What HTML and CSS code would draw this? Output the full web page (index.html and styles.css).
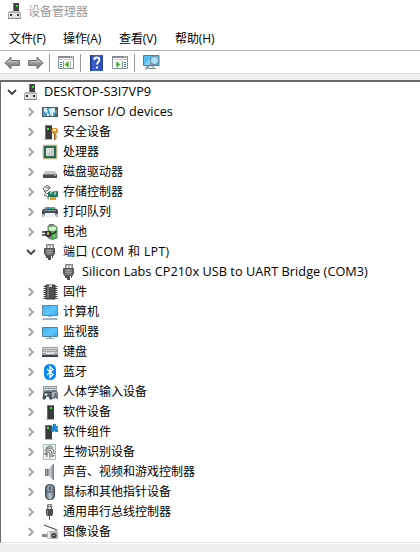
FILE: index.html
```
<!DOCTYPE html>
<html lang="zh-CN">
<head>
<meta charset="utf-8">
<title>设备管理器</title>
<link rel="stylesheet" href="styles.css">
</head>
<body>
<svg class="defs" width="0" height="0">
  <defs>
    <linearGradient id="screen" x1="0" y1="0" x2="1" y2="1"><stop offset="0" stop-color="#35acf0"/><stop offset=".55" stop-color="#62c6ff"/><stop offset="1" stop-color="#2fabf5"/></linearGradient>
    <linearGradient id="metal" x1="0" x2="1"><stop offset="0" stop-color="#555"/><stop offset=".5" stop-color="#8a8a8a"/><stop offset="1" stop-color="#505050"/></linearGradient>
    <linearGradient id="arrow" x1="0" y1="0" x2="0" y2="1"><stop offset="0" stop-color="#b4b4b4"/><stop offset="1" stop-color="#777"/></linearGradient>
    <linearGradient id="help" x1="0" x2="1"><stop offset="0" stop-color="#1c3a94"/><stop offset=".2" stop-color="#3d62c8"/><stop offset="1" stop-color="#2c4eb4"/></linearGradient>
    <linearGradient id="mouse" x1="0" x2="1"><stop offset="0" stop-color="#53606e"/><stop offset=".5" stop-color="#b9c8d8"/><stop offset="1" stop-color="#56616e"/></linearGradient>
    <linearGradient id="cone" x1="0" x2="1"><stop offset="0" stop-color="#59636c"/><stop offset=".6" stop-color="#c3c8cd"/><stop offset="1" stop-color="#727b83"/></linearGradient>
    <symbol id="right" viewBox="0 0 10 10"><path d="M2.800 1l4 4-4 4" fill="none" stroke="#a3a3a3" stroke-width="1.900"/></symbol>
    <symbol id="down" viewBox="0 0 10 10"><path d="M1 3l4 4 4-4" fill="none" stroke="#404040" stroke-width="1.800"/></symbol>
    <symbol id="tower" viewBox="0 0 16 16"><path d="M4 15h8v1H4z" fill="#b5b5b5"/><path d="M5 1h7v14H5z" fill="#3a3a3a"/><path d="M5 1h1v14H5z" fill="#686868"/><path d="M5 1h7v1H5z" fill="#777"/><path d="M8 3h2v2H8z" fill="#35f53b"/></symbol>
    <symbol id="plug" viewBox="0 0 16 16"><path d="M4 0h8v5H4z" fill="#b8b8b8"/><path d="M4.500 .5h7v4.500h-7z" fill="none" stroke="#858585"/><path d="M6 2h1v2H6zM9 2h1v2H9z" fill="#fff"/><path d="M2.500 4.500h10V9l-1 2.500h-8L2.500 9z" fill="url(#metal)" stroke="#555"/><path d="M4 6.500h7M4 8.500h7" stroke="#999"/><path d="M4 12h2v2H4zM6 12h3v4H6zM10 12h1v2h-1z" fill="#505050"/></symbol>
    <symbol id="computer" viewBox="0 0 14 16"><path d="M5 0h6v8H5z" fill="#444"/><path d="M5 0h1v8H5z" fill="#777"/><path d="M8 2h2v2H8z" fill="#2bdf34"/><path d="M1 8h11l1 2H0z" fill="#b5b5b5"/><path d="M0 10h13v5H0z" fill="#e4e4e4"/><path d="M0 10h1v5H0zM12 10h1v5h-1z" fill="#aaa"/><path d="M0 15h13v1H0z" fill="#858585"/><path d="M2 11h2v2H2zM9 11h2v2H9z" fill="#333"/></symbol>
  </defs>
</svg>
<div class="window">
  <header class="titlebar"><svg class="app-icon"><use href="#computer"/></svg><span>设备管理器</span></header>
  <nav class="menu"><span>文件(F)</span><span>操作(A)</span><span>查看(V)</span><span>帮助(H)</span></nav>
  <div class="toolbar">
    <svg class="arrow-icon" viewBox="0 0 17 14"><path d="M.8 7L7 1v3.500h8.500v5H7V13z" fill="url(#arrow)" stroke="#747474"/><path d="M3 7l3-3v1.800h8" fill="none" stroke="#ccc" stroke-width=".8"/></svg>
    <svg class="arrow-icon next" viewBox="0 0 17 14"><path d="M16.200 7L10 1v3.500H1.500v5H10V13z" fill="url(#arrow)" stroke="#747474"/><path d="M3 5.800h8V4l3 3" fill="none" stroke="#ccc" stroke-width=".8"/></svg>
    <i class="sep first"></i>
    <svg class="panel-icon" viewBox="0 0 16 13"><path d="M.5 .5h15v12H.5z" fill="#fff" stroke="#8c939b"/><path d="M0 0h16v2H0z" fill="#858c94"/><path d="M12 1h1M14 1h1" stroke="#fff"/><path d="M1 3h14v1H1z" fill="#c5cad0"/><path d="M5.500 5v7" stroke="#999"/><path d="M2 6.500h2M2 8.500h2M2 10.500h2" stroke="#4573aa"/><path d="M6 5h6v7H6z" fill="#e3f2db"/><path d="M10.500 5.500v6L7 8.500z" fill="#36a21c"/><path d="M12.500 5v7" stroke="#b0b5ba"/></svg>
    <i class="sep second"></i>
    <svg class="help-icon" viewBox="0 0 13 16"><path d="M0 0h13v16H0z" fill="url(#help)"/><path d="M1 0v16" stroke="#173179"/><path d="M4.500 5V4q0-1.500 2.400-1.500T9.300 5c0 2-2.300 2.200-2.300 4.500M7 11.500v2" fill="none" stroke="#fff" stroke-width="1.900"/></svg>
    <svg class="panel-icon show" viewBox="0 0 16 13"><path d="M.5 .5h15v12H.5z" fill="#fff" stroke="#8c939b"/><path d="M0 0h16v2H0z" fill="#858c94"/><path d="M12 1h1M14 1h1" stroke="#fff"/><path d="M1 3h14v1H1z" fill="#c5cad0"/><path d="M3 5h6v7H3z" fill="#e3f2db"/><path d="M4.500 5.500v6L8 8.500z" fill="#36a21c"/><path d="M10.500 5v7" stroke="#999"/><path d="M12 6.500h2M12 8.500h2M12 10.500h2" stroke="#4573aa"/></svg>
    <i class="sep third"></i>
    <svg class="scan-icon" viewBox="0 0 17 16"><path d="M.5 .5h15.500v10H.5z" fill="#55bdf4" stroke="#3686af"/><path d="M1 10L10 1h5v2L8 10z" fill="#83d2fb"/><path d="M5 13.500h8M8 11h2v2" stroke="#7b8991" fill="none"/><circle cx="11.500" cy="5.500" r="4" fill="#aee0fb" stroke="#768b9b" stroke-width="1.200"/><path d="M8.500 8.500L2.500 14" stroke="#8196a5" stroke-width="1.800"/></svg>
  </div>
  <div class="gap"></div>
  <main class="tree">
    <div class="row root"><svg class="chev"><use href="#down"/></svg><svg class="root-icon"><use href="#computer"/></svg><span class="label latin host">DESKTOP-S3I7VP9</span></div>
    <div class="row"><svg class="chev"><use href="#right"/></svg><svg class="icon" viewBox="0 0 16 16"><path d="M0 3h16v10H0z" fill="#4b5964"/><path d="M1 4h12v8H1z" fill="#459fc9"/><path d="M2 4h3v2l1 2-2 1-2-2zM7 5l3-1h3v4l-2 1v3H9l-1-3zM5 9l2 1v2H5z" fill="#d9f2fb"/><path d="M14 6v4" stroke="#b9c2c9"/></svg><span class="label latin">Sensor I/O devices</span></div>
    <div class="row"><svg class="chev"><use href="#right"/></svg><svg class="icon" viewBox="0 0 16 16"><path d="M2 15h8v1H2z" fill="#b5b5b5"/><path d="M3 1h7v14H3z" fill="#3a3a3a"/><path d="M3 1h1v14H3zM3 1h7v1H3z" fill="#777"/><path d="M5 4h2v2H5z" fill="#35f53b"/><path d="M10 4h5l1 2v2l-1.500 2H14v6h-2v-6h-1L9.500 8V6z" fill="#d99b35"/><path d="M11 5h3v2h-3z" fill="#fff1ce"/><path d="M12.500 9v7M14 12h1M14 14h1" stroke="#9b651f"/></svg><span class="label">安全设备</span></div>
    <div class="row"><svg class="chev"><use href="#right"/></svg><svg class="icon" viewBox="0 0 16 16"><path d="M1.500 1.500h13v13h-13z" fill="#316c50" stroke="#b8a767" stroke-width="2" stroke-dasharray="1 1"/><path d="M2.500 2.500h11v11h-11z" fill="#316c50" stroke="#2f684d"/><path d="M4 4h8v8H4z" fill="#d9dddc"/><path d="M4 12l8-8v8z" fill="#c6caca"/></svg><span class="label">处理器</span></div>
    <div class="row"><svg class="chev"><use href="#right"/></svg><svg class="icon" viewBox="0 0 16 16"><path d="M3 7h10l2 3H1z" fill="#c9c9c9"/><path d="M1 10h14v4H1z" fill="#4b4b4b"/><path d="M1 10h14v1H1z" fill="#858585"/><path d="M12 11h2v1h-2z" fill="#30ec44"/></svg><span class="label">磁盘驱动器</span></div>
    <div class="row"><svg class="chev"><use href="#right"/></svg><svg class="icon" viewBox="0 0 16 16"><path d="M1.500 4L5 1.500l3.500 2L5 7H3L1.500 5.500zM4 4h3M2 7l3 3 3-3" fill="#fff" stroke="#555"/><path d="M6 8l10-1v6H6z" fill="#29755d"/><path d="M8 8h2v2H8zM12 8h2v3h-2z" fill="#85c6ae"/><path d="M2 9h3v4H2zM6 13h1v3H6z" fill="#cfd3d2"/><path d="M8 13h6v3H8z" fill="#eda21c"/><path d="M2 10l4 3v2" fill="none" stroke="#777"/></svg><span class="label">存储控制器</span></div>
    <div class="row"><svg class="chev"><use href="#right"/></svg><svg class="icon" viewBox="0 0 16 16"><path d="M3 3h10l1 3H2z" fill="#8b9399"/><path d="M5 3h3v3H5z" fill="#2697e8"/><path d="M8 3h3v3H8z" fill="#34bd66"/><path d="M1 5h14l1 2v5H0V7z" fill="#454c52"/><path d="M2 6h12v1H2z" fill="#8e979e"/><path d="M3 9h10l1 5H2z" fill="#edf3f7"/><path d="M0 10h3l-1 3H0zM13 10h3v3h-2z" fill="#b3b9be"/></svg><span class="label">打印队列</span></div>
    <div class="row"><svg class="chev"><use href="#right"/></svg><svg class="icon" viewBox="0 0 16 16"><path d="M7 0h5v2H7z" fill="#777"/><path d="M6 2q4-1 8 0l1 2v10q-4 3-9 0z" fill="#48b452" stroke="#777b78"/><path d="M7 3q4-1 7 0v3q-3 2-7 0z" fill="#d6efcf"/><path d="M12 8v5" stroke="#93ed8c"/><path d="M3 7h5l2 2-1 4H5l-2-2z" fill="#383838"/><path d="M0 8h4M0 11h5M9 10q4 0 5-3" stroke="#343434" stroke-width="1.700" fill="none"/><path d="M5 8h2v3H5z" fill="#b5a667"/></svg><span class="label">电池</span></div>
    <div class="row"><svg class="chev"><use href="#down"/></svg><svg class="icon"><use href="#plug"/></svg><span class="label ports">端口 (COM 和 LPT)</span></div>
    <div class="row child"><svg class="icon"><use href="#plug"/></svg><span class="label latin">Silicon Labs CP210x USB to UART Bridge (COM3)</span></div>
    <div class="row"><svg class="chev"><use href="#right"/></svg><svg class="icon" viewBox="0 0 16 16"><path d="M3 2v14M14 2v14" stroke="#444" stroke-width="3" stroke-dasharray="1 1"/><path d="M4 1h9v14H4z" fill="#505050"/><path d="M5 2h2v12H5z" fill="#777"/><path d="M4 1h9v14H4z" fill="none" stroke="#333"/><path d="M7 1h3v2H7z" fill="#ccc"/></svg><span class="label">固件</span></div>
    <div class="row"><svg class="chev"><use href="#right"/></svg><svg class="icon" viewBox="0 0 16 16"><path d="M.5 1.500h15v10H.5z" fill="url(#screen)" stroke="#668699"/><path d="M6 12h4v1H6z" fill="#a6b9c6"/><path d="M1 14h14l1 2H0z" fill="#9fb4c3"/></svg><span class="label">计算机</span></div>
    <div class="row"><svg class="chev"><use href="#right"/></svg><svg class="icon" viewBox="0 0 16 16"><path d="M.5 3.500h15v9H.5z" fill="url(#screen)" stroke="#4f839e"/><path d="M7 13h2v1H7zM4 14h8v1H4z" fill="#8fa1ac"/></svg><span class="label">监视器</span></div>
    <div class="row"><svg class="chev"><use href="#right"/></svg><svg class="icon" viewBox="0 0 16 16"><path d="M0 3h16v8H0z" fill="#9aa3aa"/><path d="M0 11h16v2H0z" fill="#3e4347"/><path d="M1 4.500h14M2 6.500h12M1 8.500h14" stroke="#f7f7f7" stroke-dasharray="1 .6"/><path d="M4 9.500h8" stroke="#e9edf0"/></svg><span class="label">键盘</span></div>
    <div class="row"><svg class="chev"><use href="#right"/></svg><svg class="icon" viewBox="0 0 16 16"><rect x="2" width="12" height="16" rx="5.500" fill="#0687f2"/><path d="M5 5l6 5.500-3 3v-11l3 3L5 11" fill="none" stroke="#fff" stroke-width="1.300"/></svg><span class="label">蓝牙</span></div>
    <div class="row"><svg class="chev"><use href="#right"/></svg><svg class="icon" viewBox="0 0 16 16"><path d="M1 2h14v7H1z" fill="#939ba2"/><path d="M2 3.500h12M2 5.500h12" stroke="#fff" stroke-dasharray="1 .6"/><path d="M1 14l1-5 2-1h4l2 2v5H8l-1-3H4l-1 3H1z" fill="#53606a" stroke="#303a42"/><path d="M9 14V9l2-2h3l2 3v4h-2v-4h-1v4z" fill="#aab2b8" stroke="#404950"/><path d="M4 9v3M2.500 10.500h3" stroke="#eef1f3"/><path d="M7 9h1v1H7z" fill="#3ea4ef"/></svg><span class="label">人体学输入设备</span></div>
    <div class="row"><svg class="chev"><use href="#right"/></svg><svg class="icon"><use href="#tower"/></svg><span class="label">软件设备</span></div>
    <div class="row"><svg class="chev"><use href="#right"/></svg><svg class="icon" viewBox="0 0 16 16"><path d="M3 15h8v1H3z" fill="#b5b5b5"/><path d="M3 1h7v14H3z" fill="#3a3a3a"/><path d="M3 1h1v14H3zM3 1h7v1H3z" fill="#777"/><path d="M5 3h2v2H5z" fill="#35f53b"/><path d="M9 2h2V0h3v2h2v2h-1v1h1v3h-3V7h-1v1H9V5h1V4H9z" fill="#2386d2"/></svg><span class="label">软件组件</span></div>
    <div class="row"><svg class="chev"><use href="#right"/></svg><svg class="icon" viewBox="0 0 16 16"><path d="M1.500 .5h12v15h-12z" fill="#edf4f1" stroke="#9dbeb2"/><path d="M4 4q4-4 7 0M3 7q0-3 4-3 5 0 5 4v2M4 11V8q0-2 3-2t3 3v4M5 13V9q0-1 2-1 1 0 1 2v4M3 9v2M12 11l-1 2" fill="none" stroke="#4b514f" stroke-width=".9"/></svg><span class="label">生物识别设备</span></div>
    <div class="row"><svg class="chev"><use href="#right"/></svg><svg class="icon" viewBox="0 0 16 16"><path d="M3 5h4l4-5h1v16h-1l-4-4H3z" fill="url(#cone)"/><path d="M3 5h3v7H3z" fill="#707980"/><path d="M4 6h1v5H4z" fill="#b0b6bb"/></svg><span class="label">声音、视频和游戏控制器</span></div>
    <div class="row"><svg class="chev"><use href="#right"/></svg><svg class="icon" viewBox="0 0 16 16"><rect x="3.500" y=".5" width="9" height="15" rx="4" fill="url(#mouse)" stroke="#363c43"/><path d="M8 1v7M4 7q4 3 8 0" fill="none" stroke="#4f5963"/><path d="M7.500 3h1v3h-1z" fill="#252a2e"/></svg><span class="label">鼠标和其他指针设备</span></div>
    <div class="row"><svg class="chev"><use href="#right"/></svg><svg class="icon" viewBox="0 0 16 16"><path d="M5.500 .5h4v5h-4z" fill="#d0d0d0" stroke="#777"/><path d="M6 2h1v1H6zM8 2h1v1H8z" fill="#444"/><path d="M4 5h7v5l-1 2H5l-1-2z" fill="#4c4c4c"/><path d="M5 6h1v5H5z" fill="#888"/><path d="M7 12h1v4H7z" fill="#555"/></svg><span class="label">通用串行总线控制器</span></div>
    <div class="row"><svg class="chev"><use href="#right"/></svg><svg class="icon" viewBox="0 0 16 16"><path d="M2 1l13 5" stroke="#4f4f4f" stroke-width="1.300"/><path d="M14 6v3" stroke="#777"/><path d="M0 10h5v3H0z" fill="#858585"/><path d="M5 8l2-1h9v8H6l-1-1z" fill="#bababa"/><path d="M6 8h2v6H6z" fill="#f0f0f0"/><circle cx="12" cy="11.500" r="2.600" fill="#3e4443"/><path d="M11 11h2v1h-2z" fill="#62c0b4"/></svg><span class="label">图像设备</span></div>
  </main>
  <footer class="status"></footer>
</div>
</body>
</html>
```
FILE: styles.css
```
* { box-sizing: border-box; }
body { margin: 0; background: #fff; overflow: hidden; }
.defs { display: block; height: 0; }
svg { display: block; flex: none; }
.window {
  width: 420px;
  height: 552px;
  display: flex;
  flex-direction: column;
  font: 12px/20px "Open Sans", "Noto Sans CJK SC", sans-serif;
  color: #000;
  white-space: nowrap;
}
.titlebar { height: 26px; display: flex; align-items: flex-start; padding: 2px 0 0 8px; color: #999; }
.app-icon { width: 14px; height: 16px; margin: 1px 6px 0 0; }
.menu { height: 24px; display: flex; align-items: center; padding: 2px 0 0 9px; }
.menu span { width: 56px; letter-spacing: -.1px; }
.menu span:first-child { width: 54px; }
.toolbar { height: 24px; display: flex; align-items: center; border-top: 1px solid #b4b4b4; border-bottom: 1px solid #ddd; padding: 1px 0 0 4px; }
.arrow-icon { width: 17px; height: 14px; }
.next { margin-left: 6px; }
.sep { width: 1px; height: 18px; background: #999; }
.first { margin: 0 8px 0 5px; }
.panel-icon { width: 16px; height: 13px; }
.second { margin: 0 9px 0 6px; }
.help-icon { width: 13px; height: 16px; }
.show { margin-left: 9px; }
.third { margin: 0 8px 0 6px; }
.scan-icon { width: 17px; height: 16px; }
.gap { height: 6px; background: #efefef; }
.tree { height: 463px; border-top: 2px solid #696969; border-left: 1px solid #696969; border-bottom: 1px solid #e3e3e3; }
.row { height: 20px; display: flex; align-items: center; padding-left: 25px; }
.root { padding-left: 6px; }
.chev { width: 10px; height: 10px; margin-right: 6px; }
.root .chev { margin-right: 7px; }
.root-icon { width: 14px; height: 16px; margin-right: 6px; }
.icon { width: 16px; height: 16px; margin-right: 5px; }
.child { padding-left: 60px; }
.latin { font-size: 12.7px; letter-spacing: .05px; padding-bottom: 2px; }
.host { letter-spacing: 0; }
.ports { letter-spacing: .45px; }
.status { height: 9px; background: #f0f0f0; border-top: 1px solid #fff; }
```
